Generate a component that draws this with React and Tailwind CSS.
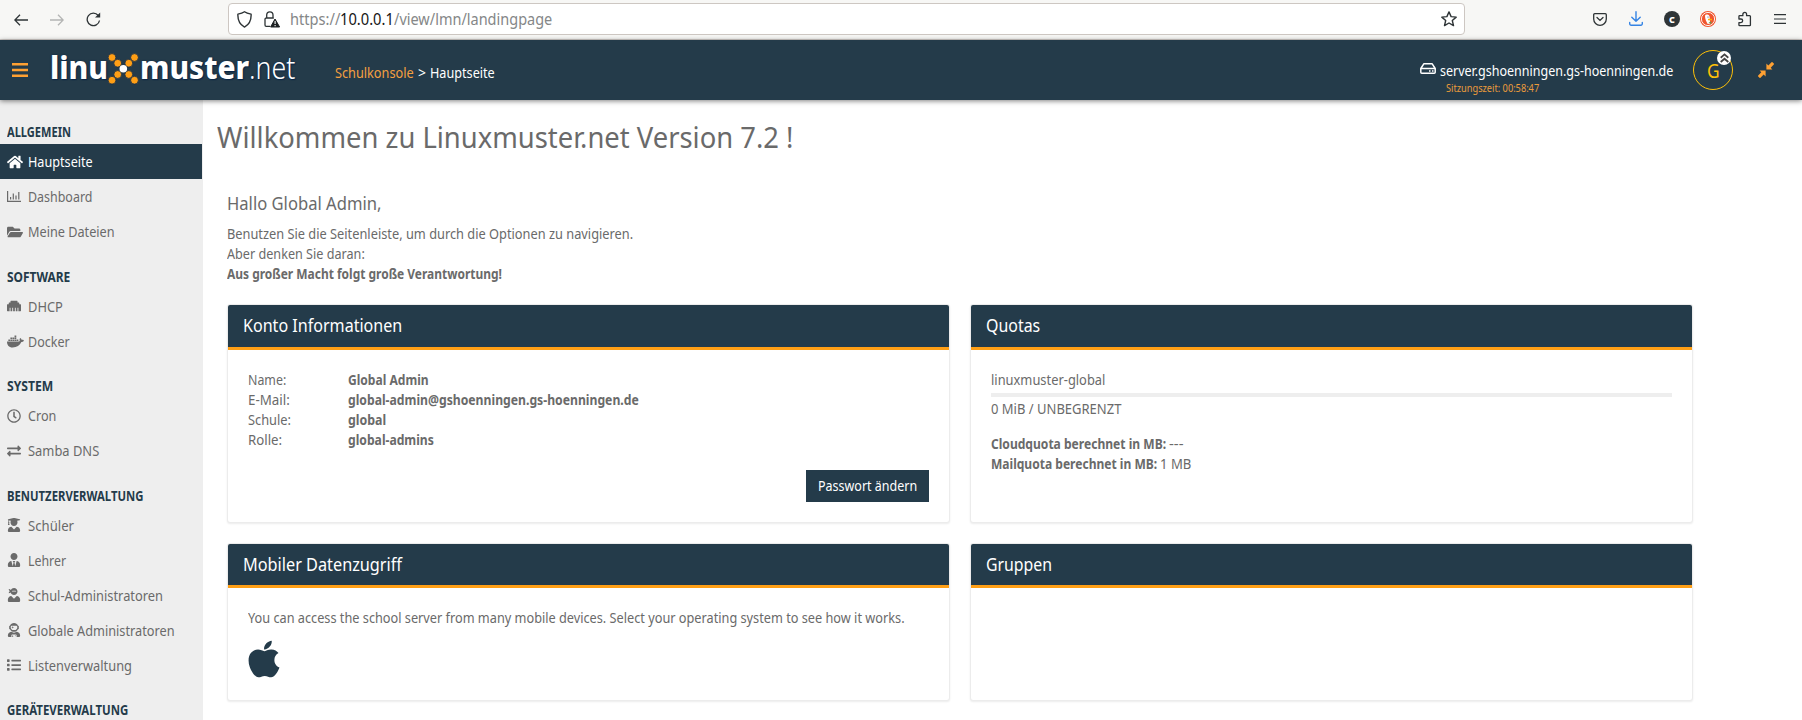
import React, { useLayoutEffect, useRef, useState } from "react";
import { FaHome, FaFolderOpen, FaEthernet, FaDocker, FaRegClock, FaExchangeAlt, FaUserGraduate, FaUserTie, FaUserNinja, FaUserAstronaut, FaList, FaApple } from "react-icons/fa";

/* Text condensed horizontally so that it fills exactly `w` pixels. */
function Fit({ w, className = "", children }) {
  const inner = useRef(null);
  const [scale, setScale] = useState(1);
  useLayoutEffect(() => {
    const natural = inner.current.offsetWidth;
    if (natural) setScale(w / natural);
  }, [w, children]);
  return (
    <span className={"inline-flex shrink-0 whitespace-pre " + className} style={{ width: w }}>
      <span ref={inner} className="block shrink-0 origin-left" style={{ transform: `scaleX(${scale})` }}>
        {children}
      </span>
    </span>
  );
}

function ChartIcon() {
  return (
    <svg width="14" height="12" viewBox="0 0 14 12" fill="none" stroke="currentColor" strokeWidth="1.2">
      <path d="M.6 0v10.400H14M3.600 8.500V6M6.300 8.500v-6M9 8.500v-4M11.800 8.500V1" />
    </svg>
  );
}

const groups = [
  { title: "ALLGEMEIN", w: 64, items: [
    { label: "Hauptseite", w: 65, Icon: FaHome, size: 16, active: true },
    { label: "Dashboard", w: 64, Icon: ChartIcon },
    { label: "Meine Dateien", w: 87, Icon: FaFolderOpen, size: 16 },
  ] },
  { title: "SOFTWARE", w: 63, items: [
    { label: "DHCP", w: 35, Icon: FaEthernet, size: 14 },
    { label: "Docker", w: 42, Icon: FaDocker, size: 17 },
  ] },
  { title: "SYSTEM", w: 46, items: [
    { label: "Cron", w: 28, Icon: FaRegClock, size: 14 },
    { label: "Samba DNS", w: 71, Icon: FaExchangeAlt, size: 14 },
  ] },
  { title: "BENUTZERVERWALTUNG", w: 136.5, items: [
    { label: "Schüler", w: 46, Icon: FaUserGraduate, size: 14 },
    { label: "Lehrer", w: 38, Icon: FaUserTie, size: 14 },
    { label: "Schul-Administratoren", w: 135, Icon: FaUserNinja, size: 14 },
    { label: "Globale Administratoren", w: 146.5, Icon: FaUserAstronaut, size: 14 },
    { label: "Listenverwaltung", w: 103.5, Icon: FaList, size: 14 },
  ] },
  { title: "GERÄTEVERWALTUNG", w: 121, items: [] },
];

function BrowserBar() {
  return (
    <div className="flex h-10 shrink-0 items-center border-b border-[#d5d0cc] bg-[#f7f7f5] text-[#2e3436]">
      <svg className="ml-3.5" width="14" height="12" viewBox="0 0 14 12" fill="none" stroke="currentColor" strokeWidth="1.3"><path d="M14 6H1M6 .7.8 6 6 11.3" /></svg>
      <svg className="ml-[22px] text-[#b4b5b4]" width="14" height="12" viewBox="0 0 14 12" fill="none" stroke="currentColor" strokeWidth="1.3"><path d="M0 6h13M8 .7 13.2 6 8 11.3" /></svg>
      <svg className="ml-[22px]" width="15" height="15" viewBox="0 0 15 15" fill="none" stroke="currentColor" strokeWidth="1.3"><path d="M12.200 3.500A6.200 6.200 0 1 0 13.500 8.500" /><path d="M14.200.4v5.200H9z" fill="currentColor" stroke="none" /></svg>
      <div className="ml-[127px] mt-[-1px] flex h-8 w-[1237px] items-center rounded border border-[#cdc7c2] bg-white">
        <svg className="ml-2" width="15" height="17" viewBox="0 0 15 17" fill="none" stroke="currentColor" strokeWidth="1.4" strokeLinejoin="round"><path d="M7.500.8C5.500 2.300 3 2.800.9 3.100c-.3 5.400 1.200 10.200 6.600 13 5.400-2.800 6.900-7.600 6.600-13-2.100-.3-4.600-.8-6.600-2.300z" /></svg>
        <svg className="ml-3" width="17" height="17" viewBox="0 0 17 17" fill="none" stroke="currentColor" strokeWidth="1.3"><path d="M6 15.300H2.200a1.200 1.200 0 0 1-1.200-1.200V8.200A1.200 1.200 0 0 1 2.200 7h7.600M2.700 7V4a3 3 0 0 1 6.300 0v3.500" /><path d="M11 8 15.600 16H6.600z" fill="#1c2022" stroke="#1c2022" strokeLinejoin="round" strokeWidth="1" /><path d="M11.100 10v3M11.100 14v1.200" stroke="#fff" strokeWidth="1.100" /></svg>
        <div className="ml-[9px] flex text-[15.500px] leading-5 text-[#858788]">
          <Fit w={50}>https://</Fit><Fit w={54} className="text-[#151515]">10.0.0.1</Fit><Fit w={158}>/view/lmn/landingpage</Fit>
        </div>
        <svg className="ml-auto mr-[7px]" width="16" height="16" viewBox="0 0 16 16" fill="none" stroke="currentColor" strokeWidth="1.4" strokeLinejoin="round"><path d="m8 .9 2.100 4.700 5.100.5-3.900 3.400 1.200 5.100L8 12l-4.500 2.600 1.200-5.100L.8 6.100l5.100-.5z" /></svg>
      </div>
      <svg className="-mt-px ml-[128px]" width="14" height="13" viewBox="0 0 14 13" fill="none" stroke="currentColor" strokeWidth="1.3" strokeLinecap="round"><path d="M1.700.7h10.600a1 1 0 0 1 1 1V6A6.300 6.300 0 0 1 .7 6V1.700a1 1 0 0 1 1-1zM4 4.500l3 2.900 3-2.900" /></svg>
      <svg className="-mt-0.5 ml-[22px] text-[#3584e4]" width="14" height="15" viewBox="0 0 14 15" fill="none" stroke="currentColor" strokeWidth="1.400" strokeLinecap="round" strokeLinejoin="round"><path d="M7 .8v9.400M2.800 6.200 7 10.300l4.200-4.100M.7 11.500v1.300a1.400 1.400 0 0 0 1.400 1.400h9.800a1.400 1.400 0 0 0 1.400-1.400v-1.300" /></svg>
      <div className="-mt-px ml-[21px] flex size-4 items-center justify-center rounded-full bg-[#2e3436] text-[9px] font-black leading-none text-white">C</div>
      <svg className="-mt-px ml-5" width="16" height="16" viewBox="0 0 16 16"><circle cx="8" cy="8" r="8" fill="#f0562f" /><circle cx="8" cy="8" r="6.600" fill="none" stroke="#fff" strokeWidth=".9" /><path d="M5 5C5.200 3.600 6.800 3.200 8.300 3.800c1.400.6 1.500 2.600 1.500 4.600l.4 4-2.500.6C6.500 11 5 8 5 5z" fill="#fff" /><circle cx="8" cy="6" r=".6" fill="#2d4f8e" /><path d="M8 7.800h4V9.300H8z" fill="#fdb20a" /><path d="m8.500 11 3-.3-.5 2.300z" fill="#5b9e4d" /></svg>
      <svg className="-mt-px ml-[22px]" width="14" height="16" viewBox="0 0 15 16" fill="none" stroke="currentColor" strokeWidth="1.400" strokeLinejoin="round"><path d="M1 8V5.200a.8.8 0 0 1 .8-.8h3.400V3a2 2 0 0 1 4 0v1.400h3.300a.8.8 0 0 1 .8.8v9.200a.8.8 0 0 1-.8.8H1.800A.8.800 0 0 1 1 14.400v-2.600h2.100a1.900 1.900 0 0 0 0-3.800z" /></svg>
      <svg className="-mt-0.5 ml-[22px]" width="12" height="10" viewBox="0 0 12 10" stroke="currentColor" strokeWidth="1.200"><path d="M0 .7h12M0 5h12M0 9.300h12" /></svg>
    </div>
  );
}

const dots = [[4, 4.500], [26.500, 4.500], [9.700, 10.200], [20.800, 10.200], [9.700, 21.500], [20.800, 21.500], [4, 27.200], [26.500, 27.200]];

function Logo() {
  return (
    <div className="ml-[22px] flex h-[34px] w-[246px] items-start text-[32px] leading-[34px] text-white [text-shadow:0_0_2px_#0a2547,1px_1px_1px_#0a2547]">
      <Fit w={58} className="-mt-[3px] font-extrabold">linu</Fit>
      <svg className="shrink-0" width="32" height="33" viewBox="0 0 32 33">
        {dots.map(([x, y]) => <circle key={x + "-" + y} cx={x} cy={y} r="3.900" fill="#ff9f15" stroke="#0f2a4a" strokeWidth=".8" />)}
        <circle cx="15.300" cy="15.800" r="3.800" fill="#fff" />
      </svg>
      <Fit w={109} className="-mt-[3px] font-extrabold">muster</Fit>
      <Fit w={46} className="-mt-[3px] font-light">.net</Fit>
    </div>
  );
}

function Header() {
  return (
    <header className="relative z-10 flex h-[60px] shrink-0 items-center bg-[#243b4a] text-sm text-white shadow-[0_1px_5px_rgba(0,0,0,0.5)]">
      <svg className="ml-3 text-[#ffa133]" width="16" height="14" viewBox="0 0 16 14" stroke="currentColor" strokeWidth="2.500"><path d="M0 1.250h16M0 7h16M0 12.750h16" /></svg>
      <Logo />
      <nav className="ml-[39px] mt-[5px] flex leading-5">
        <Fit w={79} className="text-[#f5a040]">Schulkonsole</Fit>
        <Fit w={8} className="ml-1">&gt;</Fit>
        <Fit w={65} className="ml-1">Hauptseite</Fit>
      </nav>
      <div className="ml-auto mr-[20px] flex flex-col pt-[15px]">
        <div className="flex h-5 items-center">
          <svg className="-mt-1 mr-1" width="16" height="11" viewBox="0 0 16 11" fill="none" stroke="currentColor" strokeWidth="1.500" strokeLinejoin="round"><path d="M.8 5.500 3.800.8h8.400l3 4.700v3.700a1 1 0 0 1-1 1H1.800a1 1 0 0 1-1-1zM.8 5.500h14.400M9 8h1.500M12 8h1.500" /></svg>
          <Fit w={233} className="leading-5">server.gshoenningen.gs-hoenningen.de</Fit>
        </div>
        <Fit w={93} className="ml-[26px] text-[10px] leading-[14px] text-[#eb9c3b]">Sitzungszeit: 00:58:47</Fit>
      </div>
      <div className="relative flex size-10 items-center justify-center rounded-full border border-[#ffc107] text-[20px] leading-none text-[#ffc107]">
        <Fit w={13} className="mt-0.5">G</Fit>
        <span className="absolute right-px top-0 flex size-[14px] items-center justify-center rounded-full bg-white">
          <svg width="9" height="10" viewBox="0 0 9 10" fill="none" stroke="#444" strokeWidth="1.800"><path d="m.7 4.700 3.800-3.300 3.800 3.300M.7 9 4.500 5.700 8.300 9" /></svg>
        </span>
      </div>
      <svg className="ml-[25px] mr-[28px] text-[#ffa133]" width="16" height="16" viewBox="0 0 16 16" fill="currentColor"><path d="M8.400 1.600v6h6l-1.700-1.900 3.100-3.200a.8.800 0 0 0 0-1L14.500.2a.8.800 0 0 0-1 0l-3.200 3.200zM7.600 14.400v-6h-6l1.700 1.900-3.100 3.200a.8.800 0 0 0 0 1l1.300 1.300a.8.800 0 0 0 1 0l3.200-3.200z" /></svg>
    </header>
  );
}

function Sidebar() {
  return (
    <aside className="flex w-[203px] shrink-0 flex-col overflow-hidden bg-[#eee] pt-[4.500px] text-sm text-[#6a6a6a]">
      {groups.map((g) => (
        <section key={g.title} className="shrink-0">
          <h2 className="flex h-[39.500px] items-end pb-0.5 pl-[7px] font-bold leading-5 text-[#243b4a]">
            <Fit w={g.w}>{g.title}</Fit>
          </h2>
          {g.items.map(({ label, w, Icon, size, active }) => (
            <a key={label} className={"flex h-[35px] w-[202px] items-center pl-[7px] leading-5 " + (active ? "bg-[#243b4a] text-white" : "")}>
              <span className="flex w-[21px] shrink-0 overflow-visible"><Icon size={size} className="shrink-0" /></span>
              <Fit w={w} className="mt-px">{label}</Fit>
            </a>
          ))}
        </section>
      ))}
    </aside>
  );
}

function Card({ title, w, tall, children }) {
  return (
    <section className="overflow-hidden rounded-[3px] border border-[#ececec] bg-white shadow-[0_1px_2px_rgba(0,0,0,0.08)]">
      <h3 className={"flex items-center border-b-[3px] border-[#ff9f15] bg-[#243b4a] pb-0.5 pl-[15px] text-lg leading-6 text-white " + (tall ? "h-[45px]" : "h-11")}>
        <Fit w={w}>{title}</Fit>
      </h3>
      <div className="px-5 pt-5">{children}</div>
    </section>
  );
}

const account = [
  ["Name:", 38, "Global Admin", 81],
  ["E-Mail:", 42, "global-admin@gshoenningen.gs-hoenningen.de", 291],
  ["Schule:", 43, "global", 38],
  ["Rolle:", 34, "global-admins", 86],
];

export default function App() {
  return (
    <div className="flex h-[720px] w-[1802px] flex-col overflow-hidden bg-white font-['Noto_Sans',sans-serif] text-[#6a6a6a]">
      <BrowserBar />
      <Header />
      <div className="flex min-h-0 flex-1">
        <Sidebar />
        <main className="flex flex-1 flex-col text-sm leading-5">
          <h1 className="ml-3.5 mt-[17px] flex text-[29px] leading-10"><Fit w={576}>Willkommen zu Linuxmuster.net Version 7.2 !</Fit></h1>
          <div className="ml-6 mt-[34px] flex flex-col">
            <h2 className="flex text-lg leading-6"><Fit w={154}>Hallo Global Admin,</Fit></h2>
            <p className="mt-[9px] flex flex-col">
              <Fit w={406}>Benutzen Sie die Seitenleiste, um durch die Optionen zu navigieren.</Fit>
              <Fit w={138}>Aber denken Sie daran:</Fit>
              <Fit w={275} className="font-bold">Aus großer Macht folgt große Verantwortung!</Fit>
            </p>
            <div className="mt-5 grid grid-cols-[723px_723px] grid-rows-[219px_158px] gap-5">
              <Card title="Konto Informationen" w={159} tall>
                <dl>
                  {account.map(([k, kw, v, vw]) => (
                    <div key={k} className="flex">
                      <dt className="w-[100px]"><Fit w={kw}>{k}</Fit></dt>
                      <dd className="font-bold"><Fit w={vw}>{v}</Fit></dd>
                    </div>
                  ))}
                </dl>
                <div className="mt-5 flex justify-end">
                  <button className="flex h-8 w-[123px] items-center justify-center bg-[#243b4a] text-white"><Fit w={99}>Passwort ändern</Fit></button>
                </div>
              </Card>
              <Card title="Quotas" w={54} tall>
                <div className="flex"><Fit w={114}>linuxmuster-global</Fit></div>
                <div className="mt-[3px] h-1 bg-[#eee]" />
                <div className="mt-0.5 flex"><Fit w={130}>0 MiB / UNBEGRENZT</Fit></div>
                <div className="mt-[15px] flex gap-[3px]"><Fit w={175} className="font-bold">Cloudquota berechnet in MB:</Fit><Fit w={15}>---</Fit></div>
                <div className="flex gap-[3px]"><Fit w={166} className="font-bold">Mailquota berechnet in MB:</Fit><Fit w={31}>1 MB</Fit></div>
              </Card>
              <Card title="Mobiler Datenzugriff" w={159}>
                <div className="flex"><Fit w={657}>You can access the school server from many mobile devices. Select your operating system to see how it works.</Fit></div>
                <FaApple className="mt-[10px] h-[42px] w-[32px] text-[#243b4a]" />
              </Card>
              <Card title="Gruppen" w={66} />
            </div>
          </div>
        </main>
      </div>
    </div>
  );
}
